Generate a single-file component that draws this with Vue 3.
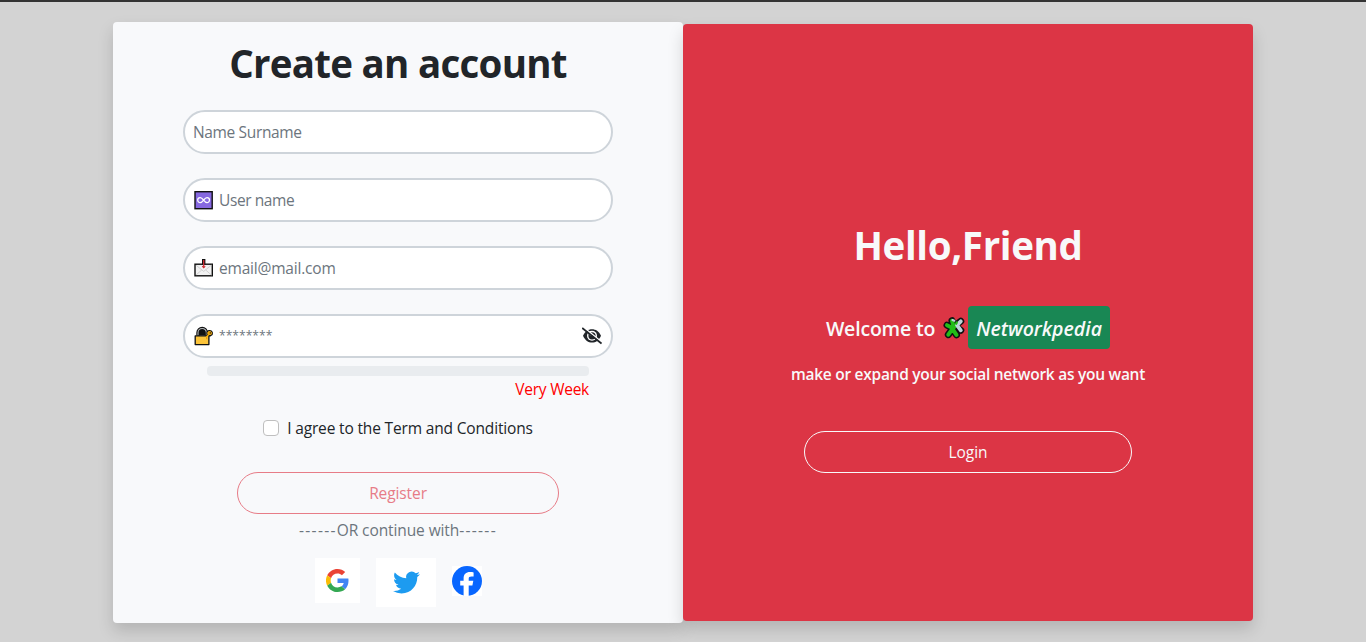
<script setup>
import { ref } from 'vue'

const agreed = ref(false)
</script>

<template>
  <main class="page">
    <section class="card signup">
      <h1 class="title">Create an account</h1>
      <form class="form" @submit.prevent>
        <label class="field"><input class="name" type="text" placeholder="Name Surname" /></label>
        <label class="field">
          <svg class="emoji" viewBox="0 0 20 20">
            <rect x="1" y="1.7" width="17.2" height="17" fill="#8668e0" stroke="#111" stroke-width="1.4" />
            <path d="M9.6 10.100C8.300 8.400 7.500 7.600 6.200 7.600a2.500 2.500 0 0 0 0 5c1.300 0 2.100-.8 3.400-2.500s2.100-2.500 3.400-2.500a2.500 2.500 0 0 1 0 5c-1.300 0-2.100-.8-3.400-2.500z" fill="none" stroke="#fff" stroke-width="1.3" />
          </svg>
          <input class="user" type="text" placeholder="User name" />
        </label>
        <label class="field">
          <svg class="emoji" viewBox="0 0 20 20">
            <rect x="1" y="6.2" width="17.3" height="11.600" fill="#f2f2f2" stroke="#111" stroke-width="1.4" />
            <path d="M2 17l5.700-5M17.400 17l-5.700-5M2 7.200l7.700 6.200 7.700-6.200" fill="none" stroke="#c9c9c9" stroke-width=".8" />
            <path d="M9.700 1v5.800" stroke="#111" stroke-width="3.4" />
            <path d="M9.700 2v7.500" stroke="#d22f35" stroke-width="1.3" />
            <path d="M8.200 8.200l1.500 1.600 1.500-1.600" fill="none" stroke="#d22f35" stroke-width="1.1" />
          </svg>
          <input class="mail" type="email" placeholder="email@mail.com" />
        </label>
        <label class="field">
          <svg class="emoji" viewBox="0 0 20 20">
            <path d="M4 9.500V6.700a4.200 4.200 0 0 1 8.400 0v2.800" fill="#111" stroke="#111" stroke-width="3.4" />
            <path d="M4 9.500V6.700a4.200 4.200 0 0 1 8.400 0v2.800" fill="none" stroke="#b4b8ba" stroke-width="1.1" />
            <path d="M1.200 9.900h10.900l1.200-1.300c-1.200-2.100.4-4.200 2.600-4 2.900.3 3.300 3.900.9 4.900l-1.900.5v8.600H1.200z" fill="#fcc43a" stroke="#111" stroke-width="1.3" stroke-linejoin="round" />
            <path d="M12 10.200l1.900-1.700c-1.200-1.800.3-3.400 2-3.200 2.100.3 2.500 2.800.6 3.500l-2 .4-1.200 1.400v2.700H12z" fill="#f1a600" />
            <circle cx="16.300" cy="6.900" r=".7" fill="#111" />
          </svg>
          <input class="secret" type="text" placeholder="********" />
          <svg class="eye" viewBox="0 0 20 20">
            <path d="M1 9.700C3.200 5.200 6.200 3.200 10 3.200s6.800 2 9 6.500c-2.200 4.800-5.200 6.800-9 6.800s-6.800-2-9-6.800z" fill="#212529" />
            <circle cx="10" cy="9.800" r="5" fill="#fff" />
            <circle cx="10" cy="9.800" r="3.600" fill="#212529" />
            <circle cx="9" cy="8.400" r="1.400" fill="#fff" />
            <path d="M1.200 1l19 15.400" stroke="#fff" stroke-width="1.600" />
            <path d="M.2 2l19.300 15.500" stroke="#212529" stroke-width="1.700" />
          </svg>
        </label>
        <div class="meter"></div>
        <div class="strength"><span>Very Week</span></div>
        <label class="terms">
          <input v-model="agreed" type="checkbox" />
          <span>I agree to the Term and Conditions</span>
        </label>
        <button class="pill register" type="submit"><span>Register</span></button>
      </form>
      <p class="or"><span class="dash">------</span><span>OR continue with</span><span class="dash">------</span></p>
      <div class="social">
        <a class="google">
          <svg viewBox="0 0 48 48">
            <path fill="#EA4335" d="M24 9.5c3.54 0 6.71 1.22 9.21 3.6l6.85-6.85C35.9 2.38 30.47 0 24 0 14.62 0 6.51 5.38 2.56 13.22l7.98 6.19C12.43 13.72 17.74 9.5 24 9.5z" />
            <path fill="#4285F4" d="M46.98 24.55c0-1.57-.15-3.09-.38-4.55H24v9.02h12.94c-.58 2.96-2.26 5.48-4.78 7.18l7.73 6c4.51-4.18 7.09-10.36 7.09-17.65z" />
            <path fill="#FBBC05" d="M10.53 28.59a14.5 14.5 0 0 1 0-9.18l-7.98-6.19a24 24 0 0 0 0 21.56z" />
            <path fill="#34A853" d="M24 48c6.48 0 11.93-2.13 15.89-5.81l-7.73-6c-2.15 1.45-4.92 2.3-8.16 2.3-6.26 0-11.57-4.22-13.47-9.91l-7.98 6.19C6.51 42.62 14.62 48 24 48z" />
          </svg>
        </a>
        <a class="twitter">
          <svg viewBox="0 0 24 24">
            <path fill="#1d9bf0" d="M23.953 4.57a10 10 0 0 1-2.825.775 4.958 4.958 0 0 0 2.163-2.723c-.951.555-2.005.959-3.127 1.184a4.92 4.92 0 0 0-8.384 4.482C7.69 8.095 4.067 6.13 1.64 3.162a4.822 4.822 0 0 0-.666 2.475c0 1.71.87 3.213 2.188 4.096a4.904 4.904 0 0 1-2.228-.616v.06a4.923 4.923 0 0 0 3.946 4.827 4.996 4.996 0 0 1-2.212.085 4.936 4.936 0 0 0 4.604 3.417 9.867 9.867 0 0 1-6.102 2.105c-.39 0-.779-.023-1.17-.067a13.995 13.995 0 0 0 7.557 2.209c9.053 0 13.998-7.496 13.998-13.985 0-.21 0-.42-.015-.63A9.935 9.935 0 0 0 24 4.59z" />
          </svg>
        </a>
        <a class="facebook">
          <svg viewBox="0 0 30 30">
            <circle cx="15" cy="15" r="15" fill="#0866ff" />
            <path fill="#fff" d="M11.6 30V19.4H8.2v-4.600h3.400v-2.200c0-4.400 2.300-6.600 6.500-6.600 1.200 0 2.800.2 3.500.4v4.200h-2.100c-2.200 0-2.800.7-2.800 2.500v1.700h4.600l-.9 4.600h-3.700V30z" />
          </svg>
        </a>
      </div>
    </section>

    <section class="card hello">
      <h1 class="title greeting">Hello,Friend</h1>
      <div class="welcome">
        <span class="to">Welcome to</span>
        <svg class="puzzle" viewBox="0 0 22 22">
          <g fill="none" stroke-linecap="round" stroke-linejoin="round">
            <path d="M9 3.700L11.500 9 17.800 4.300M11.500 9l6.300 4.300M4 8.200l6 3L5.300 17.600M9.500 12l4 5.800" stroke="#111" stroke-width="7" />
            <path d="M9 3.700L10.500 9M4 8.200l6 3L5.300 17.600M9.500 12l4 5.800M10 11l4-3" stroke="#22bd18" stroke-width="4" />
            <path d="M17.800 4.300L14 8.200l3.800 5.100" stroke="#bed3dc" stroke-width="3.800" />
            <path d="M9.400 3l2 .8" stroke="#bed3dc" stroke-width="2" />
            <path d="M13.800 5.500l-.6 1.300" stroke="#22bd18" stroke-width="2.200" />
          </g>
        </svg>
        <em class="brand"><span>Networkpedia</span></em>
      </div>
      <p class="pitch"><span>make or expand your social network as you want</span></p>
      <button class="pill login" type="button"><span>Login</span></button>
    </section>
  </main>
</template>

<style>
body {
  background: #d3d3d3;
}
</style>

<style scoped>
.page,
.page * {
  box-sizing: border-box;
}
.page {
  height: 642px;
  overflow: hidden;
  display: flex;
  justify-content: center;
  align-items: flex-start;
  padding-top: 20px;
  border-top: 2px solid #333;
  background: #d3d3d3;
  color: #212529;
  font: 400 15.5px/24px "Open Sans", "Noto Sans", sans-serif;
}
.card {
  width: 570px;
  border-radius: 4px;
  box-shadow: 0 8px 16px rgba(0, 0, 0, 0.15);
  display: flex;
  flex-direction: column;
  align-items: center;
}
.signup {
  height: 601px;
  background: #f8f9fb;
}
.hello {
  height: 597px;
  margin-top: 2px;
  padding-top: 197px;
  background: #dc3545;
  color: #f8f9fa;
}
.title {
  margin: 17px 0 0;
  font-size: 38.5px;
  line-height: 48px;
  font-weight: 700;
  letter-spacing: -0.73px;
  white-space: nowrap;
}
.form {
  width: 430px;
  margin-top: 23px;
  display: flex;
  flex-direction: column;
  align-items: center;
}
.field {
  width: 430px;
  height: 44px;
  margin-bottom: 24px;
  padding: 0 9px 0 8px;
  display: flex;
  align-items: center;
  border: 2px solid #ced4da;
  border-radius: 22px;
  background: #fff;
}
.field input {
  flex: 1;
  min-width: 0;
  padding: 0;
  border: 0;
  outline: 0;
  background: transparent;
  font: inherit;
}
.field input::placeholder {
  color: #6c757d;
  opacity: 1;
}
.field .name {
  letter-spacing: -0.35px;
}
.field .user {
  letter-spacing: -0.4px;
}
.field .mail {
  letter-spacing: -0.2px;
}
.field .secret {
  font-size: 12.1px;
}
.emoji {
  flex: none;
  width: 20px;
  height: 20px;
  margin: 0 5px 0 1px;
}
.eye {
  width: 20px;
  height: 20px;
}
.meter {
  width: 382px;
  height: 10px;
  margin-top: -16px;
  border-radius: 4px;
  background: #e9ecef;
}
.strength {
  width: 382px;
  padding-top: 1px;
  text-align: right;
  letter-spacing: -0.25px;
  color: #f00;
}
.terms {
  margin-top: 15px;
  display: flex;
  align-items: center;
  gap: 8px;
  letter-spacing: -0.16px;
}
.terms input {
  appearance: none;
  width: 16px;
  height: 16px;
  margin: 0;
  border: 1px solid #bfbfbf;
  border-radius: 4px;
  background: #fff;
}
.pill {
  height: 42px;
  padding: 0;
  border: 1px solid;
  border-radius: 21px;
  background: transparent;
  font: inherit;
}
.register {
  width: 322px;
  margin-top: 32px;
  letter-spacing: -0.1px;
  color: #e77c87;
}
.or {
  margin: 4px 0 0;
  letter-spacing: -0.1px;
  color: #6c757d;
}
.dash {
  letter-spacing: 1.3px;
}
.social {
  margin-top: 16px;
  display: flex;
  gap: 16px;
}
.social a {
  display: flex;
  align-items: center;
  justify-content: center;
  background: #fff;
}
.google {
  width: 45px;
  height: 45px;
}
.google svg {
  width: 23px;
  height: 23px;
}
.twitter {
  width: 60px;
  height: 49px;
}
.twitter svg {
  width: 27px;
  height: 27px;
  margin-left: 2px;
}
.facebook {
  width: 30px;
  height: 30px;
  margin-top: 8px;
}
.facebook svg {
  width: 30px;
  height: 30px;
}
.greeting {
  margin: 0;
  letter-spacing: -0.35px;
}
.welcome {
  margin-top: 37px;
  height: 43px;
  display: flex;
  align-items: center;
  font-size: 19.5px;
  font-weight: 600;
}
.to {
  padding-top: 2px;
  letter-spacing: -0.2px;
}
.puzzle {
  width: 22px;
  height: 22px;
  margin: 1px 3px 0 8px;
}
.brand {
  width: 142px;
  height: 43px;
  border-radius: 4px;
  background: #198754;
  text-align: center;
  line-height: 46px;
}
.pitch {
  margin: 13px 0 0;
  letter-spacing: -0.27px;
  font-weight: 600;
}
.login {
  width: 328px;
  margin-top: 45px;
  color: #f8f9fa;
}
</style>
